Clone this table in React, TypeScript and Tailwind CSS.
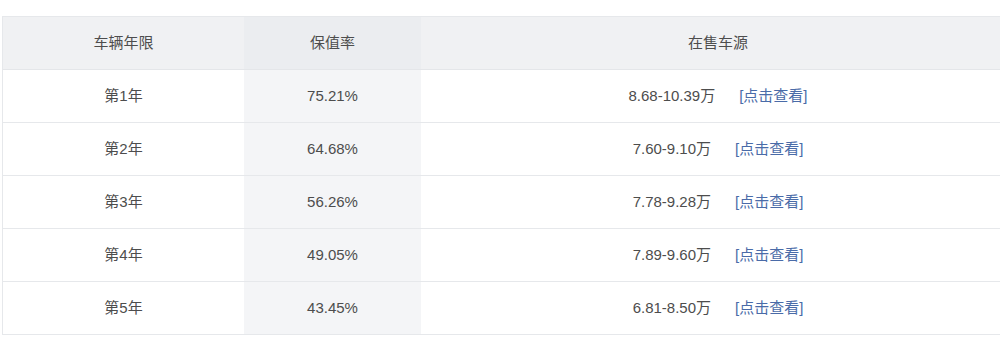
import React from 'react';

const ROWS = [
  { year: '第1年', rate: '75.21%', price: '8.68-10.39万' },
  { year: '第2年', rate: '64.68%', price: '7.60-9.10万' },
  { year: '第3年', rate: '56.26%', price: '7.78-9.28万' },
  { year: '第4年', rate: '49.05%', price: '7.89-9.60万' },
  { year: '第5年', rate: '43.45%', price: '6.81-8.50万' },
];

export default function App() {
  return (
    <div
      className="w-[1000px] h-[339px] overflow-hidden bg-white pt-4 pl-[2px] text-[15px] text-[#4d4d4d]"
      style={{ fontFamily: '"Liberation Sans", "Noto Sans CJK SC", sans-serif' }}
    >
      <div className="w-[1012px] border-l border-t border-[#e6e8eb]">
        {/* Header */}
        <div className="grid grid-cols-[241px_177px_594px] h-[53px] border-b border-[#e4e6e9] bg-[#f0f1f3]">
          <div className="flex items-center justify-center">车辆年限</div>
          <div className="flex items-center justify-center bg-[#ebedf0]">保值率</div>
          <div className="flex items-center justify-center">在售车源</div>
        </div>
        {ROWS.map((r) => (
          <div key={r.year} className="grid grid-cols-[241px_177px_594px] h-[53px] border-b border-[#e6e8eb]">
            <div className="flex items-center justify-center">{r.year}</div>
            <div className="flex items-center justify-center bg-[#f4f5f7]">{r.rate}</div>
            <div className="flex items-center justify-center gap-[24px]">
              <span>{r.price}</span>
              <a className="text-[#4a6ba8] cursor-pointer">[点击查看]</a>
            </div>
          </div>
        ))}
      </div>
    </div>
  );
}
